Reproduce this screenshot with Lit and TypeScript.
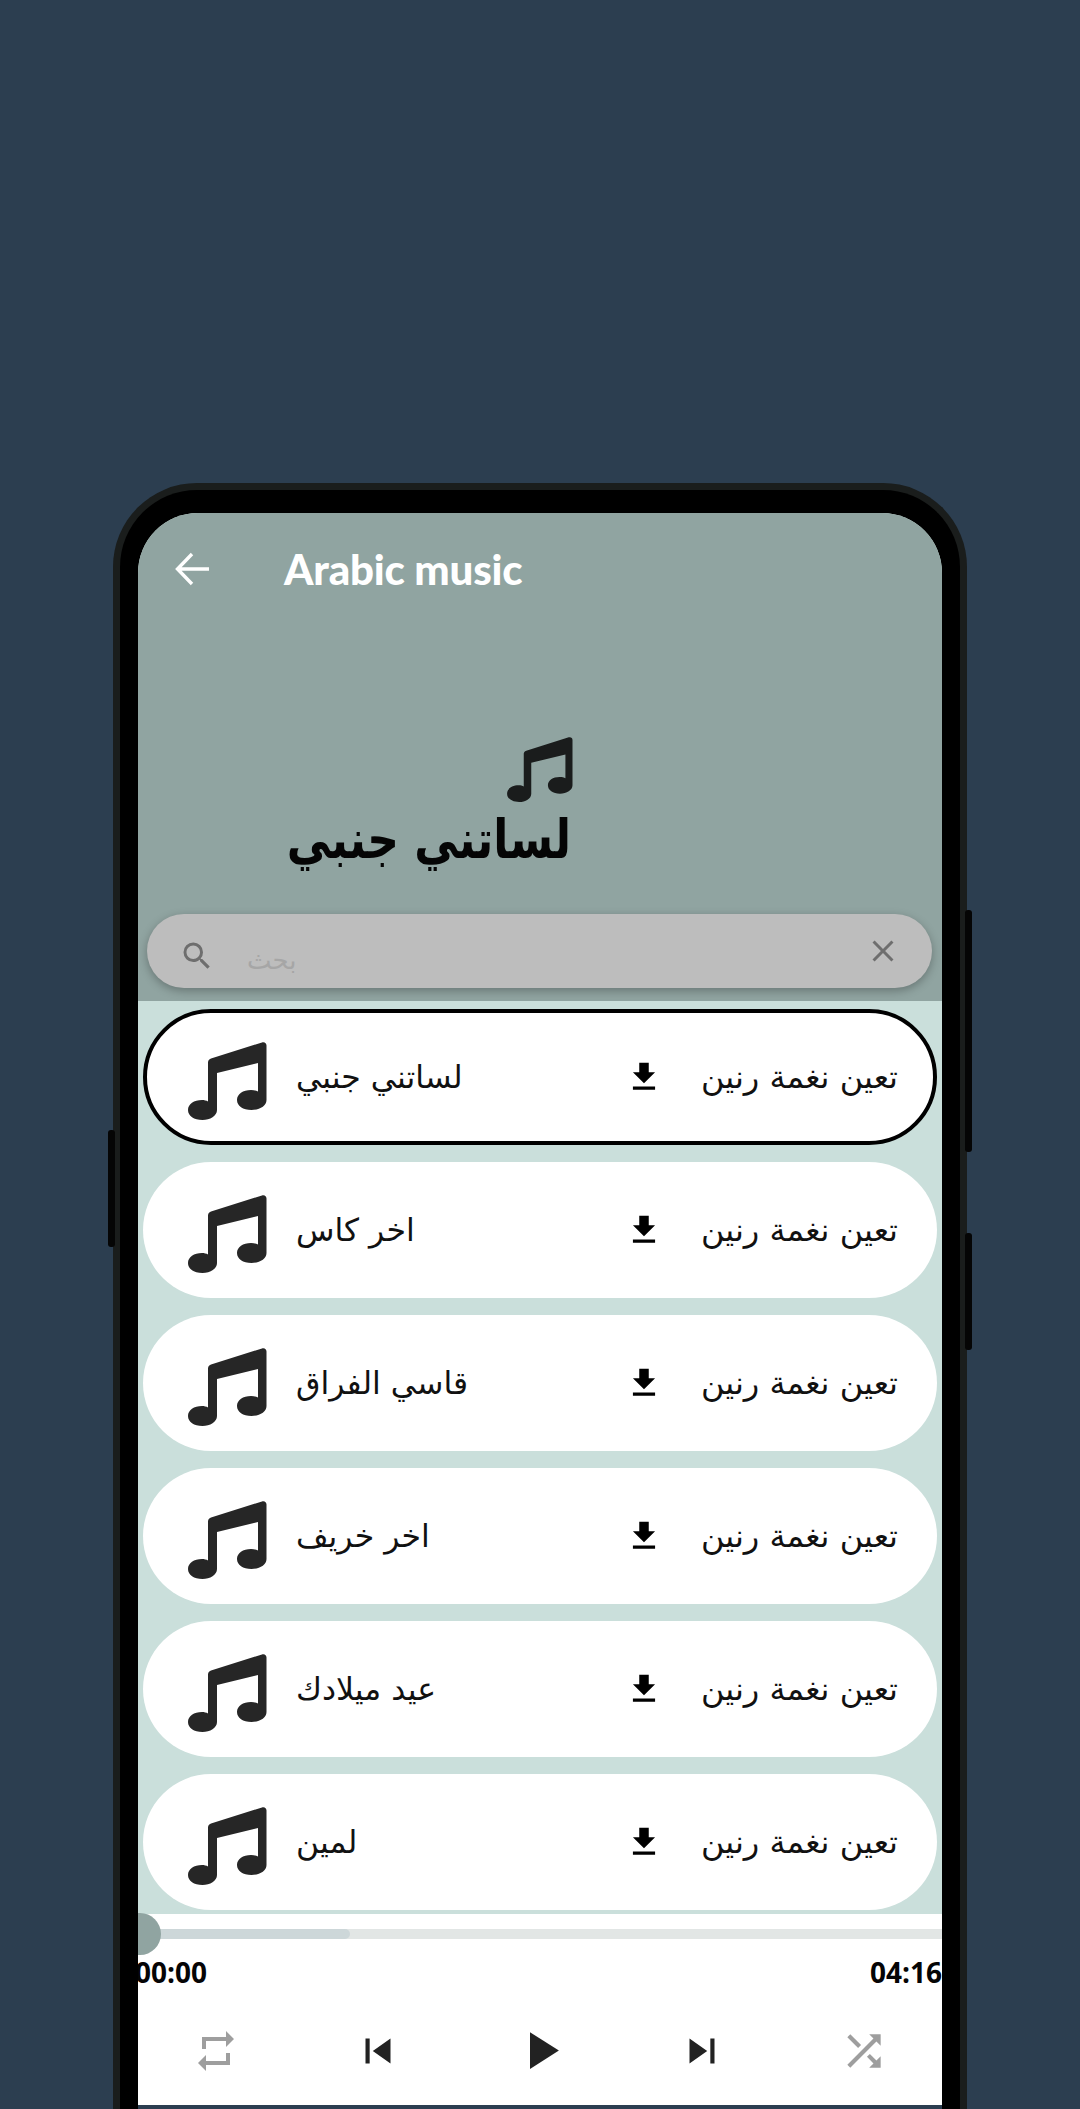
import { LitElement, html, css, svg } from "lit";
import { customElement } from "lit/decorators.js";

const note = svg`<path d="M20 20.500C20 18.500 21 17.200 23 16.500L74 .4C76.500-.3 78.500 1 78.500 3.500V58C78.500 64 71.500 68 63.500 68 55 68 49 64 49 58 49 52 55 48 63 48 66 48 68.500 48.600 70 49.500V21L29 31V68C29 74 22 78 14.500 78 6 78 0 74 0 68 0 62 6 58 14 58 16 58 18.500 58.500 20 59.500Z"/>`;
const rows = ["لساتني جنبي", "اخر كاس", "قاسي الفراق", "اخر خريف", "عيد ميلادك", "لمين"];

@customElement("app-root")
export class AppRoot extends LitElement {
  static styles = css`
    :host { display: block; width: 1080px; height: 2109px; background: #2c3e50; overflow: hidden; font-family: "Open Sans", "Noto Sans", sans-serif; }
    .stage { height: 2109px; padding-top: 483px; box-sizing: border-box; position: relative; }
    .phone { width: 854px; height: 1626px; margin-left: 113px; box-sizing: border-box; background: #000; border: 7px solid #1a1d1c; border-bottom: 0; border-radius: 84px 84px 0 0; padding: 23px 18px 0 18px; }
    .screen { height: 1596px; background: #cadfdb; border-radius: 60px 60px 0 0; overflow: hidden; display: flex; flex-direction: column; }
    .btn { position: absolute; width: 7px; background: #050505; border-radius: 3px; }
    .header { height: 488px; flex: none; background: #90a4a1; position: relative; display: flex; flex-direction: column; }
    .top { display: flex; align-items: center; height: 112px; color: #fff; }
    .top svg { margin-left: 36px; width: 38px; height: 38px; fill: none; stroke: #fff; stroke-width: 3.400; flex: none; }
    .title { margin-left: 72px; font: 900 42px "Lato", sans-serif; letter-spacing: -.2px; }
    .song { margin-left: 146px; width: 289px; display: flex; flex-direction: column; align-items: flex-end; margin-top: 112px; }
    .song svg { width: 66px; height: 65px; fill: #1a1c1c; }
    .song div { font: 700 44px/72px "DejaVu Sans", sans-serif; color: #050505; direction: rtl; white-space: nowrap; margin-right: 2px; transform: scaleY(1.22); transform-origin: 50% 40%; }
    .search { position: absolute; left: 9px; right: 10px; top: 401px; height: 74px; border-radius: 37px; background: #bdbdbd; box-shadow: 0 3px 10px rgba(0,0,0,.28); display: flex; align-items: center; padding: 0 31px 0 32px; color: #a6a6a6; font-size: 26px; }
    .search .ph { margin-left: 32px; flex: 1; font-family: "DejaVu Sans", sans-serif; padding-top: 18px; }
    .search svg { width: 36px; height: 36px; fill: #6e6e6e; flex: none; }
    .search .mag { margin-top: 10px; }
    .list { flex: 1; display: flex; flex-direction: column; gap: 17px; padding: 8px 5px 0 5px; overflow: hidden; }
    .row { flex: none; height: 136px; background: #fff; border-radius: 68px; display: flex; align-items: center; box-sizing: border-box; padding: 0 39px 0 45px; color: #111; font: 400 32px "DejaVu Sans", sans-serif; }
    .row.on { border: 4px solid #000; padding: 0 35px 0 41px; }
    .row .n { width: 79px; height: 78px; fill: #262626; flex: none; margin-top: 8px; }
    .row .name { margin-left: 29px; flex: 1; white-space: nowrap; display: flex; justify-content: flex-start; font-size: 31.500px; }
    .row .name span { display: block; direction: rtl; }
    .row .dl { width: 38px; height: 38px; fill: #000; flex: none; margin-right: 37px; }
    .row .set { direction: rtl; white-space: nowrap; flex: none; width: 198px; text-align: right; }
    .player { height: 191px; flex: none; background: #fff; position: relative; }
    .track { position: absolute; left: 0; right: 0; top: 15px; height: 10px; background: #e2e6e5; }
    .fill { height: 10px; width: 212px; background: #cdd7d9; border-radius: 0 5px 5px 0; }
    .thumb { position: absolute; left: -19px; top: -1px; width: 42px; height: 42px; border-radius: 50%; background: #90a4a1; }
    .times { position: absolute; left: -3px; right: 0; top: 36px; display: flex; justify-content: space-between; font: 700 28px/44px "Open Sans", sans-serif; color: #050505; }
    .ctrl { position: absolute; left: -3px; top: 105px; display: grid; grid-template-columns: repeat(5, 162px); align-items: center; }
    .ctrl svg { justify-self: center; }
    .grey { fill: #9e9e9e; }
    .dark { fill: #222; }
    .strip { height: 4px; flex: none; background: #2c3e50; }
  `;

  render() {
    return html`<div class="stage">
      <div class="btn" style="left:108px;top:1130px;height:117px"></div>
      <div class="btn" style="left:965px;top:910px;height:242px"></div>
      <div class="btn" style="left:965px;top:1233px;height:117px"></div>
      <div class="phone"><div class="screen">
        <div class="header">
          <div class="top">
            <svg viewBox="0 0 38 38"><path d="M35 19H3.500M18 4 3.500 19 18 34"/></svg>
            <span class="title">Arabic music</span>
          </div>
          <div class="song">
            <svg viewBox="0 0 79 78">${note}</svg>
            <div>لساتني جنبي</div>
          </div>
          <div class="search">
            <svg class="mag" viewBox="0 0 24 24"><path d="M15.500 14h-.79l-.28-.27A6.470 6.470 0 0 0 16 9.500 6.500 6.500 0 1 0 9.500 16c1.610 0 3.090-.59 4.230-1.570l.27.28v.79l5 4.990L20.490 19l-4.990-5zm-6 0C7.010 14 5 11.990 5 9.500S7.010 5 9.500 5 14 7.010 14 9.500 11.990 14 9.500 14z"/></svg>
            <span class="ph">بحث</span>
            <svg viewBox="0 0 24 24"><path d="M19 6.410 17.590 5 12 10.590 6.410 5 5 6.410 10.590 12 5 17.590 6.410 19 12 13.410 17.590 19 19 17.590 13.410 12z"/></svg>
          </div>
        </div>
        <div class="list">
          ${rows.map((r, i) => html`<div class="row ${i === 0 ? "on" : ""}">
            <svg class="n" viewBox="0 0 79 78">${note}</svg>
            <div class="name"><span>${r}</span></div>
            <svg class="dl" viewBox="0 0 24 24"><path d="M19 9h-4V3H9v6H5l7 7 7-7zM5 18v2h14v-2H5z"/></svg>
            <div class="set">تعين نغمة رنين</div>
          </div>`)}
        </div>
        <div class="player">
          <div class="track"><div class="fill"></div></div>
          <div class="thumb"></div>
          <div class="times"><span>00:00</span><span>04:16</span></div>
          <div class="ctrl">
            <svg class="grey" width="48" height="48" viewBox="0 0 24 24"><path d="M7 7h10v3l4-4-4-4v3H5v6h2V7zm10 10H7v-3l-4 4 4 4v-3h12v-6h-2v4z"/></svg>
            <svg class="dark" width="50" height="50" viewBox="0 0 24 24"><path d="M6 6h2v12H6zm3.500 6 8.500 6V6z"/></svg>
            <svg class="dark" width="63" height="63" viewBox="0 0 24 24"><path d="M8 5v14l11-7z"/></svg>
            <svg class="dark" width="50" height="50" viewBox="0 0 24 24"><path d="M6 18l8.500-6L6 6v12zM16 6v12h2V6h-2z"/></svg>
            <svg class="grey" width="50" height="50" viewBox="0 0 24 24"><path d="M10.590 9.170 5.410 4 4 5.410l5.170 5.170 1.420-1.410zM14.500 4l2.040 2.040L4 18.590 5.410 20 17.960 7.460 20 9.500V4h-5.500zm.33 9.410-1.410 1.410 3.130 3.130L14.500 20H20v-5.500l-2.040 2.040-3.130-3.130z"/></svg>
          </div>
        </div>
        <div class="strip"></div>
      </div></div>
    </div>`;
  }
}
